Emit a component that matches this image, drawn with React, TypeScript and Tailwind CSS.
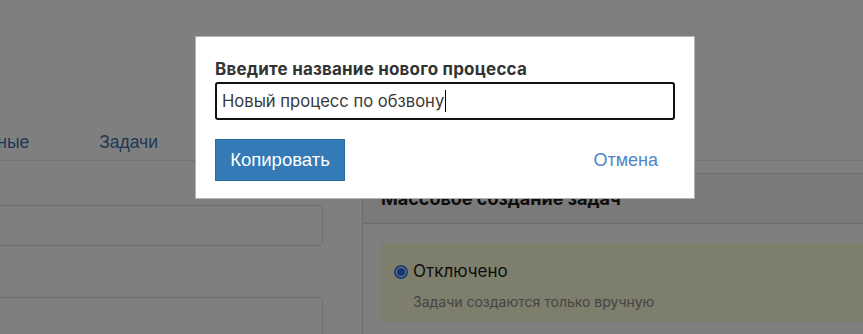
import React from "react";

export default function App() {
  return (
    <div className="relative w-[863px] h-[334px] overflow-hidden bg-white" style={{ fontFamily: "Inter, 'Noto Sans', sans-serif" }}>
      {/* Background page */}
      <div className="pt-[124px]">
        <div className="flex h-[37px] items-center border-b border-[#e6e6e6] text-[17.5px] text-[#3f72a8]" style={{ fontFamily: "'Liberation Sans', Arial, sans-serif" }}>
          <span className="ml-[-69px] px-[35px]">Данные</span>
          <span className="px-[35px]">Задачи</span>
        </div>
        <div className="flex">
          <div className="ml-[-20px] w-[343px] shrink-0 pt-[44px] flex flex-col gap-[51px]">
            <div className="h-[41px] rounded-[5px] border border-[#dcdcdc] bg-white" />
            <div className="h-[41px] rounded-[5px] border border-[#dcdcdc] bg-white" />
          </div>
          <div className="ml-[39px] mr-[-20px] mt-[12px] flex-1 border border-[#d8d8d8]">
            <div className="h-[50px] border-b border-[#d8d8d8] bg-[#f4f4f4] pl-[18px] flex items-center text-[18px] font-bold text-[#1a1a1a]">
              Массовое создание задач
            </div>
            <div className="pl-[18px] pt-[19px]">
              <div className="h-[79px] bg-[#fcfcd8] pl-[13px] pt-[16px]">
                <div className="flex items-center gap-[5px] text-[17px] text-[#1a1a1a]">
                  <span className="w-[14px] h-[14px] rounded-full border-2 border-[#3a7cf0] bg-white flex items-center justify-center">
                    <span className="w-[8px] h-[8px] rounded-full bg-[#2a6fe8]" />
                  </span>
                  <span>Отключено</span>
                </div>
                <div className="mt-[6px] ml-[19px] text-[14px] text-[#8a8a8a]">Задачи создаются только вручную</div>
              </div>
            </div>
          </div>
        </div>
      </div>

      {/* Overlay */}
      <div className="absolute inset-0 bg-black/50" />

      {/* Modal */}
      <div className="absolute left-[195px] top-[36px] w-[500px] h-[163px] bg-white border border-black/30 px-[19px] pt-[20px]">
        <div className="h-[24px] leading-[24px] text-[17px] font-bold text-[#333] tracking-[0.2px]">Введите название нового процесса</div>
        <div className="mt-px h-[38px] rounded-[3px] border-2 border-[#111] flex items-center pl-[5px] text-[16.6px] text-[#3a3a3a]">
          <span>Новый процесс по обзвону</span>
          <span className="ml-px w-px h-[22px] bg-black" />
        </div>
        <div className="mt-[19px] flex items-center justify-between">
          <button className="w-[130px] h-[42px] bg-[#337ab7] border border-[#2e6da4] text-white text-[18.5px]" style={{ fontFamily: "'Liberation Sans', Arial, sans-serif" }}>
            Копировать
          </button>
          <span className="mr-[17px] text-[18px] text-[#4f86c6]" style={{ fontFamily: "'Liberation Sans', Arial, sans-serif" }}>Отмена</span>
        </div>
      </div>
    </div>
  );
}
